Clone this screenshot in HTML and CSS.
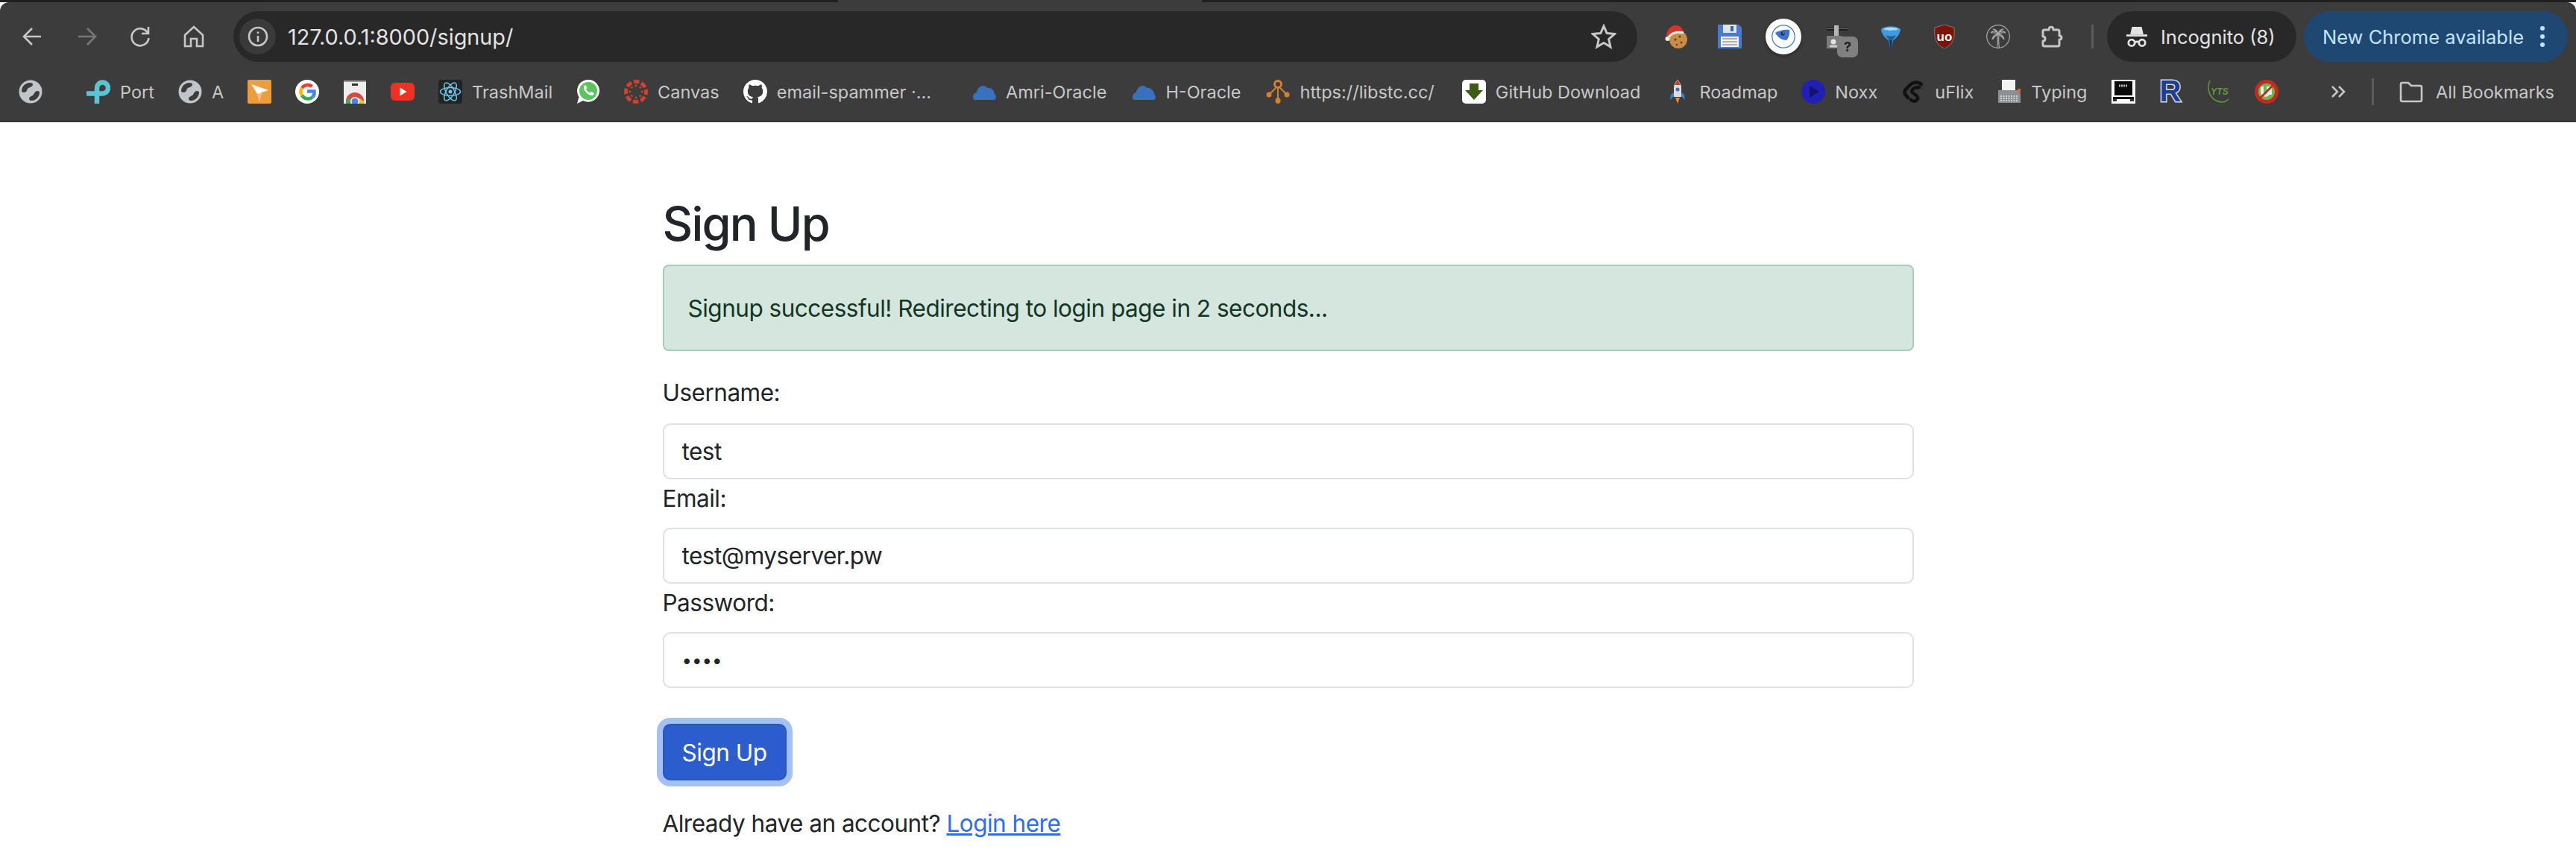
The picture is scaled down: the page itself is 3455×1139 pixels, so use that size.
FILE: index.html
```html
<!DOCTYPE html>
<html lang="en">
<head>
  <meta charset="UTF-8">
  <title>Sign Up</title>
  <link rel="stylesheet" href="styles.css">
</head>
<body>
  <!-- Browser frame -->
  <header class="chrome">
    <div class="tabstrip"><div class="tabpiece"></div></div>
    <div class="toolbar">
      <div class="row-top">
        <div class="nav-btn"><svg class="nav-ic" viewBox="0 0 40 40"><path d="M31 20H9M19 9 8 20l11 11"/></svg></div>
        <div class="nav-btn"><svg class="nav-ic dim" viewBox="0 0 40 40"><path d="M9 20h22M21 9l11 11-11 11"/></svg></div>
        <div class="nav-btn"><svg class="nav-ic" viewBox="0 0 40 40"><path d="M30 15a11.500 11.500 0 1 0 1.500 7M31 7v9h-9"/></svg></div>
        <div class="nav-btn"><svg class="nav-ic" viewBox="0 0 40 40"><path d="M8 18 20 7l12 11v15H24V23h-8v10H8z"/></svg></div>

        <div class="omnibox">
          <div class="chip"><svg class="info-ic" viewBox="0 0 32 32"><circle cx="16" cy="16" r="12"/><path d="M16 15v8"/><path d="M16 9.500v2.500"/></svg></div>
          <span class="url">127.0.0.1:8000/signup/</span>
          <svg class="star" viewBox="0 0 34 34"><path d="m17 3 4.200 9.600 10.300 1-7.800 6.900 2.300 10.300L17 25.400 8 30.800l2.300-10.300-7.800-6.900 10.300-1z"/></svg>
        </div>

        <div class="ext-group">
          <div class="ext">
            <svg class="ic" viewBox="0 0 32 32"><circle cx="19" cy="20" r="12" fill="#c98b45"/><circle cx="15" cy="20" r="1.500" fill="#6b3d17"/><circle cx="21" cy="16" r="1.500" fill="#6b3d17"/><circle cx="23" cy="24" r="1.500" fill="#6b3d17"/><circle cx="17" cy="27" r="1.200" fill="#6b3d17"/><path d="M3 15C4 5 11 0 18 1c4 1 7 5 8 9-7-1-14 0-19 7z" fill="#d8322a"/><path d="M6 17c4-6 11-8 20-6" fill="none" stroke="#f1efe9" stroke-width="3"/><circle cx="4.500" cy="19" r="3" fill="#f1efe9"/></svg>
          </div>
          <div class="ext">
            <svg class="ic" viewBox="0 0 32 32"><path d="M0 0h28l4 4v28H0z" fill="#4a79cf"/><path d="M7 0h18v11H7z" fill="#dfe3ea"/><path d="M17 2h4v7h-4z" fill="#3a62ad"/><path d="M4 16h24v14H4z" fill="#f1f1f1"/><path d="M6 19h20M6 23h20M6 27h20" stroke="#9a9a9a" stroke-width="1.500"/></svg>
          </div>
          <div class="ext">
            <div class="eye-wrap">
              <svg class="ic" viewBox="0 0 32 32"><circle cx="16" cy="16" r="15.200" fill="none" stroke="#3f7ad6" stroke-width="1.200"/><path d="M5 11c5-3 13-5 19-4 1 5-1 11-4 14-6 0-12-4-15-10z" fill="#3f74cc"/><circle cx="15" cy="12" r="2.600" fill="#16304f"/><circle cx="15.600" cy="11.400" r=".8" fill="#dfe8f5"/></svg>
            </div>
          </div>
          <div class="ext">
            <svg class="ic" viewBox="0 0 32 32"><path d="M2 3h28v5H2z" fill="#1e1e1e"/><path d="M2 5h28" stroke="#888" stroke-width="1"/><path d="M12 1h6v16h-6z" fill="#b5b5b5"/><path d="M2 15h20v17H2z" fill="#7b7b7b"/><circle cx="11" cy="23" r="3.500" fill="#e2e2e2"/><path d="M6 29h11" stroke="#d0d0d0" stroke-width="3"/></svg>
            <span class="ext-badge">?</span>
          </div>
          <div class="ext">
            <svg class="ic" viewBox="0 0 32 32"><path d="M3 6c6-5 20-5 26 0 0 6-6 13-10 15l-2 11h-2l-2-11C9 19 3 12 3 6z" fill="#3f9be0"/><path d="M6 6c5-3 15-3 20 0-3 2-4 2-7 1-3 2-5 1-8 0-2 1-3 0-5-1z" fill="#a8dcf7"/><path d="M14 21h4l-1 11h-2z" fill="#123a5e"/><path d="M9 14c2 3 4 6 5 7h4c2-2 3-4 5-7-4 2-10 2-14 0z" fill="#1d5f96"/></svg>
          </div>
          <div class="ext">
            <svg class="ic" viewBox="0 0 32 32"><path d="M16 0l13 4c1 12 0 22-13 28C3 26 2 16 3 4z" fill="#7b1409" stroke="#8f8a88" stroke-width=".8"/><text class="ublock-text" x="16" y="21.500" text-anchor="middle">uo</text></svg>
          </div>
          <div class="ext">
            <svg class="ic" viewBox="0 0 32 32" fill="none" stroke="#a9a9a9" stroke-width="1.200"><circle cx="16" cy="16" r="15.300"/><path d="M14.500 31c1-6 1-11 .5-18h2c-.5 7-.5 12 .5 18"/><path d="M16 13C13 8 9 8 6 11c3-1 6 0 10 2zM16 13c3-5 7-5 10-2-3-1-6 0-10 2zM16 13c-1-5-3-7-7-7 3 1 5 3 7 7zM16 13c1-5 3-7 7-7-3 1-5 3-7 7zM16 13c-4 0-7 2-8 7 2-3 4-5 8-7zM16 13c4 0 7 2 8 7-2-3-4-5-8-7z"/></svg>
          </div>
          <div class="ext">
            <svg class="ic" viewBox="0 0 32 32" fill="none" stroke="#c4c7c5" stroke-width="3"><path d="M6 7h6c0-5 6-5 6 0h6a2 2 0 0 1 2 2v6c4 0 4 5 0 5v7a2 2 0 0 1-2 2H6a2 2 0 0 1-2-2v-5c4 0 4-6 0-6V9a2 2 0 0 1 2-2z" stroke-linejoin="round"/></svg>
          </div>
        </div>
        <div class="sep"></div>

        <div class="pill incognito">
          <svg class="incog-ic" viewBox="0 0 30 34"><path d="M8 3h14l2.500 11h-19z" fill="#e3e3e3"/><path d="M0 15.500h30" stroke="#e3e3e3" stroke-width="3"/><g fill="none" stroke="#e3e3e3" stroke-width="3"><circle cx="7.500" cy="26" r="4.500"/><circle cx="22.500" cy="26" r="4.500"/><path d="M12 25.500c2-1.500 4-1.500 6 0"/></g></svg>
          <span>Incognito (8)</span>
        </div>
        <div class="pill update">
          <span>New Chrome available</span>
          <span class="dots"><i></i><i></i><i></i></span>
        </div>
      </div>

      <!-- Bookmarks bar -->
      <div class="bookmarks">
        <div class="bm bm-loose"><svg class="ic" viewBox="0 0 32 32"><use href="#globe"/></svg></div>
        <div class="bm bm-tight">
          <svg class="ic" viewBox="0 0 32 32"><path d="M14 32V11a7.500 7.500 0 1 1 7.500 7.500H0" fill="none" stroke="#5cc3d3" stroke-width="6.500"/></svg>
          <span>Port</span>
        </div>
        <div class="bm bm-tight"><svg class="ic" viewBox="0 0 32 32"><use href="#globe"/></svg><span>A</span></div>
        <div class="bm"><svg class="ic" viewBox="0 0 32 32"><rect width="32" height="32" rx="2" fill="#ee9d3c"/><path d="M5 6l23 8-9 3-3 12-3-10z" fill="#fff"/><path d="M16 29l-3-10 6-2z" fill="#f3b98a"/></svg></div>
        <div class="bm"><svg class="ic" viewBox="0 0 32 32"><circle cx="16" cy="16" r="16" fill="#fff"/><g fill="none" stroke-width="4.500"><path d="M9 11a9.500 9.500 0 0 1 13.500-2" stroke="#e94235"/><path d="M9 11a9.500 9.500 0 0 0 0 10" stroke="#fabb05"/><path d="M9 21a9.500 9.500 0 0 0 14 2.500" stroke="#34a853"/><path d="M23 23.500A9.500 9.500 0 0 0 25.500 15.500H16" stroke="#4285f4"/></g></svg></div>
        <div class="bm"><svg class="ic" viewBox="0 0 32 32"><path d="M1 1h30v31H1z" fill="#ededed"/><path d="M1 1h30v2H1z" fill="#999"/><path d="M12 5h8v3h-8z" fill="#333"/><path d="M4 32v-3a12 12 0 0 1 24 0v3z" fill="#d9483b"/><path d="M21 24l7 5v3h-8z" fill="#f0c33c"/><path d="M4 32v-3l4-5 6 8z" fill="#4da35a"/><circle cx="16" cy="29" r="6" fill="#fff"/><circle cx="16" cy="29" r="4.500" fill="#4a86e8"/></svg></div>
        <div class="bm"><svg class="ic" viewBox="0 0 32 32"><rect y="4" width="32" height="24" rx="6" fill="#ec3222"/><path d="M12.500 10.500v11l9-5.500z" fill="#fff"/></svg></div>
        <div class="bm bm-tight">
          <svg class="ic" viewBox="0 0 32 32"><rect width="32" height="32" rx="4" fill="#212325"/><g fill="none" stroke="#6fc5e8" stroke-width="1.500"><ellipse cx="16" cy="16" rx="13.500" ry="5.500"/><ellipse cx="16" cy="16" rx="13.500" ry="5.500" transform="rotate(60 16 16)"/><ellipse cx="16" cy="16" rx="13.500" ry="5.500" transform="rotate(120 16 16)"/></g><circle cx="16" cy="16" r="2.500" fill="#6fc5e8"/></svg>
          <span>TrashMail</span>
        </div>
        <div class="bm"><svg class="ic" viewBox="0 0 32 32"><path d="M1 32l2.500-9A15 15 0 1 1 9 28z" fill="#fff"/><circle cx="16" cy="15" r="12" fill="#5cc45e"/><path d="M10 9c-1 5 6 13 12 12 2-1 2-3 1-3.500l-3-1.500-1.500 1.500C16 17 14 15 13 12.500L14.500 11 13 8c-1-1-2.500 0-3 1z" fill="#fff"/></svg></div>
        <div class="bm bm-tight">
          <svg class="ic" viewBox="0 0 32 32"><circle cx="16" cy="16" r="13.500" fill="none" stroke="#d4412f" stroke-width="5" stroke-dasharray="7.500 3.100" stroke-dashoffset="3.500"/><g fill="#d4412f"><circle cx="16" cy="8" r="1.400"/><circle cx="16" cy="24" r="1.400"/><circle cx="8" cy="16" r="1.400"/><circle cx="24" cy="16" r="1.400"/><circle cx="10.300" cy="10.300" r="1.400"/><circle cx="21.700" cy="10.300" r="1.400"/><circle cx="10.300" cy="21.700" r="1.400"/><circle cx="21.700" cy="21.700" r="1.400"/></g></svg>
          <span>Canvas</span>
        </div>
        <div class="bm bm-trunc">
          <svg class="ic" viewBox="0 0 16 16"><path fill="#fff" d="M8 0C3.580 0 0 3.580 0 8c0 3.540 2.290 6.530 5.470 7.590.4.070.55-.17.55-.38 0-.19-.01-.82-.01-1.490-2.010.37-2.530-.49-2.690-.94-.09-.23-.48-.94-.82-1.130-.28-.15-.68-.52-.01-.53.63-.01 1.080.58 1.230.82.72 1.210 1.870.87 2.330.66.07-.52.28-.87.51-1.070-1.780-.2-3.640-.89-3.640-3.950 0-.87.31-1.590.82-2.150-.08-.2-.36-1.020.08-2.120 0 0 .67-.21 2.200.82.64-.18 1.320-.27 2-.27.68 0 1.360.09 2 .27 1.530-1.040 2.200-.82 2.200-.82.44 1.100.16 1.920.08 2.120.51.56.82 1.270.82 2.150 0 3.070-1.870 3.750-3.650 3.950.29.25.54.73.54 1.480 0 1.070-.01 1.930-.01 2.200 0 .21.15.46.55.38A8.013 8.013 0 0016 8c0-4.420-3.580-8-8-8z"/></svg>
          <span>email-spammer ·...</span>
        </div>
        <div class="bm"><svg class="ic" viewBox="0 0 32 32"><use href="#cloud"/></svg><span>Amri-Oracle</span></div>
        <div class="bm"><svg class="ic" viewBox="0 0 32 32"><use href="#cloud"/></svg><span>H-Oracle</span></div>
        <div class="bm bm-roomy">
          <svg class="ic" viewBox="0 0 32 32"><g fill="none" stroke="#d57f2f" stroke-width="2"><path d="M16 10v15M13 11 5 19M19 11l8 8"/><circle cx="16" cy="6" r="4.500" stroke-width="3"/></g><g fill="#d57f2f"><circle cx="4" cy="20" r="3.500"/><circle cx="28" cy="20" r="3.500"/><ellipse cx="16" cy="28" rx="3.500" ry="4"/></g></svg>
          <span>https://libstc.cc/</span>
        </div>
        <div class="bm">
          <svg class="ic" viewBox="0 0 32 32"><rect width="32" height="32" rx="5" fill="#fff"/><path d="M10 5h12v9h6L16 27 4 14h6z" fill="#3d5c14"/></svg>
          <span>GitHub Download</span>
        </div>
        <div class="bm bm-tight">
          <svg class="ic" viewBox="0 0 32 32"><path d="M11 22 6 27l1-7 4-3zM21 22l5 5-1-7-4-3z" fill="#3f7ad6"/><path d="M11 10c0-4 3-8 5-10 2 2 5 6 5 10v13H11z" fill="#d9dde2"/><path d="M12 7c1-3 3-5 4-7 1 2 3 4 4 7z" fill="#c9402f"/><circle cx="16" cy="13" r="2.500" fill="#3f6fb5"/><path d="M13 24h6l-3 8z" fill="#ee8a2a"/></svg>
          <span>Roadmap</span>
        </div>
        <div class="bm bm-tight">
          <svg class="ic" viewBox="0 0 32 32"><circle cx="16" cy="16" r="16" fill="#2020b4"/><path d="M11 8v16l13-8z" fill="#14146a"/></svg>
          <span>Noxx</span>
        </div>
        <div class="bm bm-tight">
          <svg class="ic" viewBox="0 0 32 32"><path d="M27 6c-5-4-11-3-15 1-4 4-9 7-7 12l4 5M13 27c4 3 8 2 9-2 1-3-3-5-6-7-3-2-2-5 2-7l6-1" fill="none" stroke="#111" stroke-width="4.500" stroke-linecap="round"/></svg>
          <span>uFlix</span>
        </div>
        <div class="bm bm-tight">
          <svg class="ic" viewBox="0 0 32 32"><path d="M6 0h18v15H6z" fill="#f2f2f2"/><path d="M1 14h28l2 6v11H1V20z" fill="#8c8f94"/><path d="M4 22h24M4 25h24M4 28h24" stroke="#e8e8e8" stroke-width="1.500" stroke-dasharray="2 1.500"/><path d="M27 12h4v6h-3z" fill="#e2683a"/></svg>
          <span>Typing</span>
        </div>
        <div class="bm">
          <svg class="ic" viewBox="0 0 32 32"><path d="M0 0h32v32H0z" fill="#fff"/><path d="M4 2h24v19H4z" fill="#0b0b0b"/><path d="M10 8h12" stroke="#bbb" stroke-width="3" stroke-dasharray="2 1"/><path d="M2 23h28v3H2z" fill="#111"/><path d="M2 26h5v3H2zM25 26h5v3h-5z" fill="#333"/></svg>
        </div>
        <div class="bm">
          <svg class="ic r-ic" viewBox="0 0 32 32"><text class="r-text" x="15" y="29" text-anchor="middle">R</text></svg>
        </div>
        <div class="bm">
          <svg class="ic" viewBox="0 0 32 32"><path d="M4 1C0 10 1 28 20 30c4 0 7-2 9-4" fill="none" stroke="#5f9a38" stroke-width="1.500"/><text class="yts-text" x="17" y="20" text-anchor="middle">YTS</text></svg>
        </div>
        <div class="bm">
          <svg class="ic" viewBox="0 0 32 32"><circle cx="16" cy="16" r="13.500" fill="#74b84a" stroke="#c42b1f" stroke-width="5"/><path d="M10 9v8c0 5 7 5 8 1V9M21 9v11" fill="none" stroke="#fff" stroke-width="3.500"/><path d="M6 26 26 6" stroke="#c42b1f" stroke-width="3"/></svg>
        </div>

        <div class="bm-right">
          <svg class="chevrons" viewBox="0 0 20 20"><path d="M2 3l7 7-7 7M11 3l7 7-7 7"/></svg>
          <div class="sep sep-bm"></div>
          <svg class="ic folder" viewBox="0 0 32 32"><path d="M2 6c0-1 .5-2 2-2h8l4 4h12c1.500 0 2 1 2 2v17c0 1-.5 2-2 2H4c-1.500 0-2-1-2-2z"/></svg>
          <span>All Bookmarks</span>
        </div>
      </div>
    </div>
  </header>

  <!-- Shared icons -->
  <svg class="defs" width="0" height="0">
    <defs>
      <g id="globe">
        <circle cx="16" cy="16" r="15.500" fill="#c1c4c9"/>
        <path d="M4 15C4 9 9 4 15 4c3 0 4 1 4 3-1 3-5 3-7 5-1 3-2 5-5 5-2 0-3-1-3-2z" fill="#3c3c3c"/>
        <path d="M28 17c0 6-5 11-11 11-2 0-3-1-3-3 1-3 4-3 6-5 1-3 3-5 5-5 2 0 3 1 3 2z" fill="#3c3c3c"/>
      </g>
      <path id="cloud" d="M3 27c-4-3-2-9 3-10 1-8 10-12 14-6 5-1 9 3 10 8 3 3 2 8-1 8z" fill="#3b70bf"/>
    </defs>
  </svg>

  <!-- Page -->
  <main class="container">
    <h1>Sign Up</h1>
    <div class="alert">Signup successful! Redirecting to login page in 2 seconds...</div>
    <form class="signup-form">
      <label for="username">Username:</label>
      <input class="field" id="username" type="text" value="test">
      <label for="email">Email:</label>
      <input class="field" id="email" type="text" value="test@myserver.pw">
      <label for="password">Password:</label>
      <input class="field field-pass" id="password" type="password" value="test">
      <button class="btn" type="button">Sign Up</button>
    </form>
    <p class="login-note">Already have an account? <a href="#">Login here</a></p>
  </main>
</body>
</html>
```

FILE: styles.css
```css
html, body {
  margin: 0;
  height: 1139px;
  overflow: hidden;
  background: #fff;
}

body {
  font-family: Inter, "Liberation Sans", sans-serif;
  color: #212529;
}

/* Browser frame */
.tabstrip {
  height: 3px;
  background: #1f2120;
  position: relative;
}

.tabpiece {
  position: absolute;
  top: 0;
  left: 1124px;
  width: 488px;
  height: 3px;
  background: #3c3c3c;
}

.toolbar {
  height: 161px;
  box-sizing: border-box;
  padding-top: 12px;
  background: #3c3c3c;
  border-radius: 12px 12px 0 0;
  border-bottom: 2px solid #353535;
}

.row-top {
  display: flex;
  align-items: center;
  height: 68px;
  padding: 0 11px 0 8px;
}

.nav-btn {
  width: 72px;
  height: 68px;
  display: flex;
  align-items: center;
  justify-content: center;
  flex: none;
}

.nav-ic {
  width: 40px;
  height: 40px;
  fill: none;
  stroke: #c7c7c7;
  stroke-width: 2.600;
}

.nav-ic.dim {
  stroke: #777;
}

.omnibox {
  flex: 1;
  height: 68px;
  margin-left: 17px;
  padding: 0 28px 0 8px;
  display: flex;
  align-items: center;
  background: #282828;
  border-radius: 34px;
}

.chip {
  width: 49px;
  height: 48px;
  margin-right: 16px;
  border-radius: 50%;
  background: #3a3a3a;
  display: flex;
  align-items: center;
  justify-content: center;
}

.info-ic {
  width: 32px;
  height: 32px;
  fill: none;
  stroke: #c7c7c7;
  stroke-width: 2.600;
}

.url {
  flex: 1;
  font-size: 28.800px;
  color: #e3e3e3;
}

.star {
  width: 34px;
  height: 34px;
  fill: none;
  stroke: #c7c7c7;
  stroke-width: 3;
}

.ext-group {
  display: flex;
  margin-left: 16px;
}

.ext {
  width: 72px;
  height: 68px;
  display: flex;
  align-items: center;
  justify-content: center;
  position: relative;
}

.ic {
  width: 32px;
  height: 32px;
  flex: none;
}

.eye-wrap {
  width: 48px;
  height: 48px;
  border-radius: 50%;
  background: #fff;
  display: flex;
  align-items: center;
  justify-content: center;
  box-shadow: 0 2px 5px rgba(0, 0, 0, .35);
}

.ext-badge {
  position: absolute;
  left: 36px;
  top: 34px;
  width: 28px;
  height: 28px;
  border-radius: 7px;
  background: #808080;
  color: #222;
  font-size: 18px;
  font-weight: 700;
  line-height: 28px;
  text-align: center;
}

.ublock-text {
  font-family: "Liberation Sans", sans-serif;
  font-size: 17px;
  font-weight: 700;
  fill: #fff;
}

.r-ic {
  overflow: visible;
}

.r-text {
  font-family: "Liberation Sans", sans-serif;
  font-size: 40px;
  font-weight: 700;
  fill: #1c3f94;
  stroke: #d5dbe8;
  stroke-width: 3;
  paint-order: stroke;
}

.yts-text {
  font-family: "Liberation Sans", sans-serif;
  font-size: 12px;
  font-style: italic;
  font-weight: 700;
  fill: #5f9a38;
}

.sep {
  width: 3px;
  height: 32px;
  margin: 0 18px 0 17px;
  background: #5c5c5c;
  flex: none;
}

.pill {
  height: 68px;
  border-radius: 34px;
  display: flex;
  align-items: center;
  box-sizing: border-box;
  flex: none;
  font-size: 25.500px;
}

.incognito {
  width: 254px;
  padding-left: 26px;
  gap: 18px;
  background: #282828;
  color: #e3e3e3;
}

.incog-ic {
  width: 28px;
  height: 32px;
}

.update {
  width: 354px;
  margin-left: 10px;
  padding-left: 25px;
  background: #1e4872;
  color: #c2e4ff;
}

.dots {
  display: flex;
  flex-direction: column;
  gap: 5px;
  margin-left: 22px;
}

.dots i {
  width: 6px;
  height: 6px;
  border-radius: 50%;
  background: #c2e4ff;
}

/* Bookmarks */
.bookmarks {
  display: flex;
  align-items: center;
  gap: 32px;
  height: 64px;
  margin-top: 8px;
  padding: 0 29px 0 25px;
  font-size: 23.500px;
  color: #c7c7c7;
}

.bm {
  display: flex;
  align-items: center;
  gap: 13px;
  padding-right: 2px;
  white-space: nowrap;
  flex: none;
}

.bm > svg:only-child {
  margin-right: -2px;
}

.bm-tight {
  padding-right: 0;
}

.bm-roomy {
  padding-right: 5px;
}

.bm-loose {
  margin-right: 27px;
}

.bm-trunc {
  margin-right: 21px;
}

.bm-right {
  margin-left: auto;
  display: flex;
  align-items: center;
  gap: 17px;
}

.chevrons {
  width: 20px;
  height: 20px;
  margin-right: 18px;
  fill: none;
  stroke: #c7c7c7;
  stroke-width: 2.500;
}

.sep-bm {
  margin: 0 17px 0 0;
  height: 36px;
}

.folder {
  fill: none;
  stroke: #c7c7c7;
  stroke-width: 2.600;
}

.defs {
  position: absolute;
}

/* Page */
.container {
  width: 1678px;
  margin: 0 auto;
  padding-top: 98px;
  font-size: 31.500px;
  line-height: 47px;
  letter-spacing: -.5px;
}

h1 {
  margin: 0 0 16px;
  font-size: 63px;
  font-weight: 500;
  line-height: 77px;
  letter-spacing: -1.800px;
}

.alert {
  height: 116px;
  box-sizing: border-box;
  padding: 0 32px;
  display: flex;
  align-items: center;
  margin-bottom: 32px;
  background: #d5e6de;
  border: 2px solid #a6cfba;
  border-radius: 8px;
  color: #123524;
}

.signup-form label {
  display: block;
  margin-bottom: 18px;
}

.field {
  display: block;
  width: 100%;
  height: 75px;
  box-sizing: border-box;
  padding: 0 24px;
  margin-bottom: 0;
  border: 2px solid #dee2e6;
  border-radius: 10px;
  outline: none;
  font: inherit;
  letter-spacing: inherit;
  color: #212529;
  background: #fff;
}

.signup-form .field + label {
  margin-top: 2px;
  margin-bottom: 16px;
}

.field-pass {
  margin-bottom: 48px;
  font-size: 24px;
  letter-spacing: 0;
}

.btn {
  display: block;
  width: 166px;
  height: 76px;
  padding: 0;
  border: 2px solid #2856ba;
  border-radius: 10px;
  background: #2b5dce;
  color: #fff;
  font: inherit;
  letter-spacing: inherit;
  box-shadow: 0 0 0 8px #a3c0f7;
}

.login-note {
  margin: 34px 0 0;
}

.login-note a {
  color: #2e6cf0;
}
```
